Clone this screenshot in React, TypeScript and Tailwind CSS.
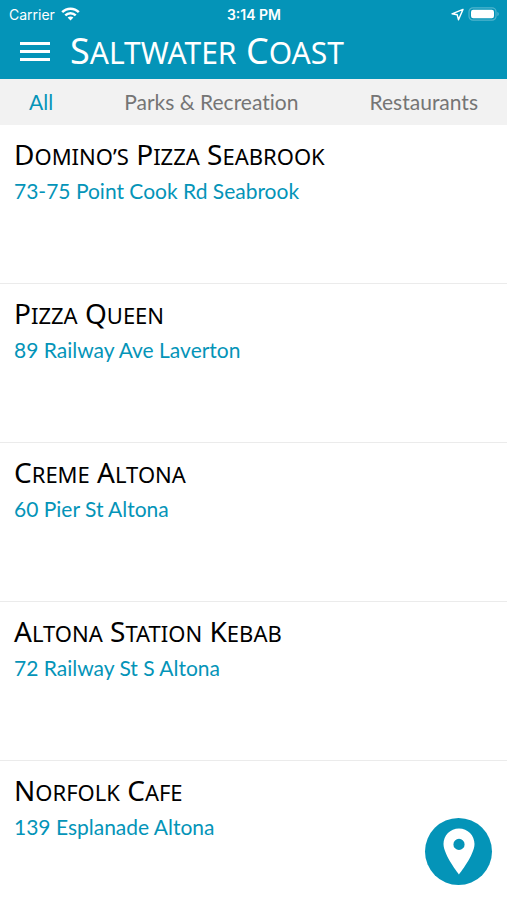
import { useState } from 'react';
import clsx from 'clsx';

interface Place {
  id: number;
  name: string;
  address: string;
}

const CATEGORIES = ['All', 'Parks & Recreation', 'Restaurants'];

const PLACES: Place[] = [
  { id: 1, name: 'Domino’s Pizza Seabrook', address: '73-75 Point Cook Rd Seabrook' },
  { id: 2, name: 'Pizza Queen', address: '89 Railway Ave Laverton' },
  { id: 3, name: 'Creme Altona', address: '60 Pier St Altona' },
  { id: 4, name: 'Altona Station Kebab', address: '72 Railway St S Altona' },
  { id: 5, name: 'Norfolk Cafe', address: '139 Esplanade Altona' },
];

// Capitals with a taller first letter on every word
function Caps({ text, className }: { text: string; className: string }) {
  return (
    <>
      {text.split(' ').map((word, i) => (
        <span key={i}>
          {i > 0 && ' '}
          <span className={clsx('inline-block uppercase', className)}>{word}</span>
        </span>
      ))}
    </>
  );
}

function StatusBar() {
  return (
    <div className="grid h-7 grid-cols-3 items-center pl-[9px] pr-2 font-['Inter',sans-serif] text-[14px] text-white">
      <div className="flex items-center gap-1.5">
        <span>Carrier</span>
        <svg viewBox="0 0 19 14" className="h-3.5 w-[19px]" fill="none" stroke="currentColor" strokeWidth="2.5">
          <path d="M1.2 5.2C5.8.5 13.2.5 17.8 5.2" />
          <path d="M4.3 8.3c2.9-2.9 7.5-2.9 10.4 0" />
          <path d="M9.5 13.6l-2.9-3c1.6-1.6 4.2-1.6 5.8 0z" fill="currentColor" stroke="none" />
        </svg>
      </div>
      <span className="text-center font-semibold">3:14 PM</span>
      <div className="flex items-center justify-end gap-1">
        <svg viewBox="0 0 13 13" className="size-[13px]" fill="none" stroke="currentColor" strokeWidth="1.4" strokeLinejoin="round">
          <path d="M12 1.4L1 5.8l5.2 1 1.3 5z" />
        </svg>
        <svg viewBox="0 0 31 14" className="h-3.5 w-[31px]">
          <rect x="1" y="0.8" width="27" height="12.4" rx="4" fill="none" stroke="#4fb4cd" strokeWidth="1.2" />
          <rect x="3" y="2.8" width="23" height="8.4" rx="2.2" fill="white" />
          <path d="M29.3 5v4c1-.3 1.5-1.1 1.5-2s-.5-1.7-1.5-2z" fill="#4fb4cd" />
        </svg>
      </div>
    </div>
  );
}

export default function App() {
  const [category, setCategory] = useState('All');

  return (
    <div className="relative flex h-screen flex-col overflow-hidden bg-white">
      <header className="bg-[#0494b8]">
        <StatusBar />
        <div className="flex h-[51px] items-center gap-5 px-5 pb-1">
          <button aria-label="Menu" className="text-white">
            <svg viewBox="0 0 30 22" className="h-[22px] w-[30px]" fill="currentColor">
              <rect y="1" width="30" height="3" />
              <rect y="9" width="30" height="3" />
              <rect y="17" width="30" height="3" />
            </svg>
          </button>
          <h1 className="font-['Noto_Sans',sans-serif] text-[36px] leading-[44px] text-white">
            <Caps text="Saltwater Coast" className="text-[30px] first-letter:text-[36px]" />
          </h1>
        </div>
      </header>

      <nav className="flex h-[46px] shrink-0 items-center justify-between bg-[#f2f2f2] px-[29px]">
        {CATEGORIES.map(c => (
          <button
            key={c}
            onClick={() => setCategory(c)}
            className={clsx(
              "font-['Lato',sans-serif] text-[21px] leading-8 [font-variant-ligatures:none]",
              c === category ? 'text-[#0494b8]' : 'text-[#757575]'
            )}>
            {c}
          </button>
        ))}
      </nav>

      <ul className="min-h-0 flex-1 overflow-y-auto [scrollbar-width:none]">
        {PLACES.map(place => (
          <li key={place.id} className="h-[159px] border-b border-[#ebebeb] px-3.5 pt-[11px]">
            <h2 className="font-['Noto_Sans',sans-serif] text-[28px] leading-9 text-black">
              <Caps text={place.name} className="text-[22px] first-letter:text-[28px]" />
            </h2>
            <p className="font-['Lato',sans-serif] text-[21px] leading-[34px] text-[#0494b8]">{place.address}</p>
          </li>
        ))}
      </ul>

      <button
        aria-label="Show map"
        className="absolute bottom-[15px] right-[15px] flex size-[67px] items-center justify-center rounded-full bg-[#0494b8]">
        <svg viewBox="0 0 32 47" className="h-[47px] w-8">
          <path
            d="M16 .5C7.2.5.5 7.4.5 16.1.5 27 16 46.5 16 46.5S31.5 27 31.5 16.1C31.5 7.4 24.8.5 16 .5zm0 21.500a5.600 5.600 0 1 1 0-11.200A5.600 5.600 0 0 1 16 22z"
            fill="white"
          />
        </svg>
      </button>
    </div>
  );
}
